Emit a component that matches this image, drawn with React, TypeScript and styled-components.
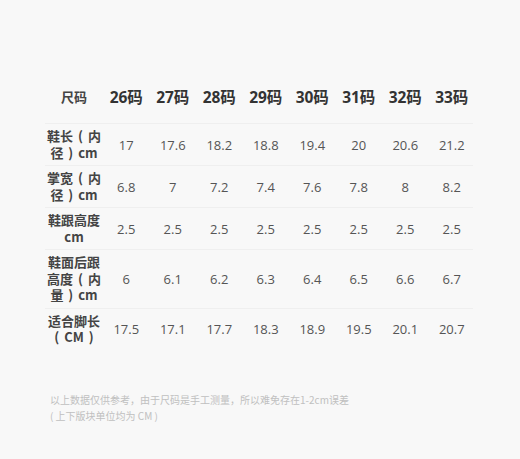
import React, { FC } from "react";
import styled, { createGlobalStyle } from "styled-components";

const GlobalStyle = createGlobalStyle`
  html, body {
    margin: 0;
    padding: 0;
    background: #f8f8f8;
  }
  body {
    font-family: "Open Sans", "Noto Sans CJK SC", sans-serif;
  }
`;

const Page = styled.div`
  width: 520px;
  height: 459px;
  box-sizing: border-box;
  padding: 70px 0 0 45px;
  background: #f8f8f8;
`;

const Table = styled.div`
  display: flex;
  flex-direction: column;
  width: 428px;
`;

const Row = styled.div<{ $last?: boolean }>`
  display: grid;
  grid-template-columns: 58px repeat(8, 46.5px);
  align-items: center;
  border-bottom: ${({ $last }) => ($last ? "none" : "1px solid #efefef")};
`;

const HeaderRow = styled(Row)`
  height: 53px;
`;

const Label = styled.div<{ $head?: boolean }>`
  padding: 4px 0;
  text-align: center;
  font-family: "Noto Sans CJK SC", sans-serif;
  font-size: 13px;
  line-height: 16.5px;
  font-weight: 700;
  color: #444;
  word-spacing: 2px;
  margin-top: ${({ $head }) => ($head ? "2px" : "0")};
`;

const SizeHead = styled.div`
  text-align: center;
  font-size: 15.5px;
  font-weight: 700;
  color: #333;
`;

const Cell = styled.div`
  text-align: center;
  font-size: 13px;
  color: #555;
`;

const Note = styled.div`
  margin-top: 42px;
  padding-left: 5px;
  font-family: "Noto Sans CJK SC", sans-serif;
  font-size: 10px;
  line-height: 16px;
  color: #c0c0c0;
`;

const sizes = ["26", "27", "28", "29", "30", "31", "32", "33"];

// labels wrap by the 58px column width, as in the picture
const rows: { label: string; values: string[] }[] = [
  { label: "鞋长 ( 内径 ) cm", values: ["17", "17.6", "18.2", "18.8", "19.4", "20", "20.6", "21.2"] },
  { label: "掌宽 ( 内径 ) cm", values: ["6.8", "7", "7.2", "7.4", "7.6", "7.8", "8", "8.2"] },
  { label: "鞋跟高度 cm", values: ["2.5", "2.5", "2.5", "2.5", "2.5", "2.5", "2.5", "2.5"] },
  { label: "鞋面后跟高度 ( 内量 ) cm", values: ["6", "6.1", "6.2", "6.3", "6.4", "6.5", "6.6", "6.7"] },
  { label: "适合脚长 ( CM )", values: ["17.5", "17.1", "17.7", "18.3", "18.9", "19.5", "20.1", "20.7"] },
];

const App: FC = () => {
  return (
    <Page>
      <GlobalStyle />
      <Table>
        <HeaderRow>
          <Label $head>尺码</Label>
          {sizes.map((s) => (
            <SizeHead key={s}>{s}码</SizeHead>
          ))}
        </HeaderRow>
        {rows.map((r, i) => (
          <Row key={r.label} $last={i === rows.length - 1}>
            <Label>{r.label}</Label>
            {r.values.map((v, j) => (
              <Cell key={j}>{v}</Cell>
            ))}
          </Row>
        ))}
      </Table>
      <Note>
        以上数据仅供参考，由于尺码是手工测量，所以难免存在1-2cm误差
        <br />( 上下版块单位均为 CM )
      </Note>
    </Page>
  );
};

export default App;
